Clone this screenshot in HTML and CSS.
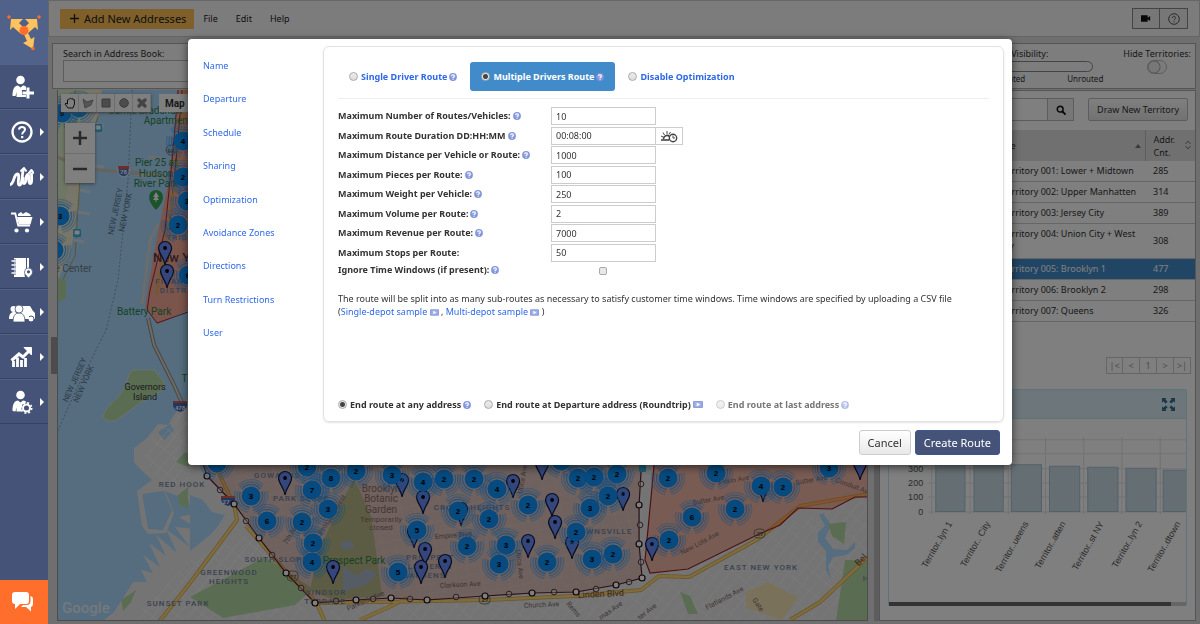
FILE: index.html
```html
<!DOCTYPE html>
<html lang="en">
<head>
<meta charset="utf-8">
<title>Route planner</title>
<link rel="stylesheet" href="styles.css">
</head>
<body>
<svg class="defs" aria-hidden="true">
  <symbol id="help" viewBox="0 0 16 16"><circle cx="8" cy="8" r="7.800" fill="#8094d8"/><circle cx="8" cy="6.500" r="5" fill="#93a5e4"/><path d="M5.300 6.200c0-3.600 5.400-3.300 5.400-.3 0 2.100-2.500 2-2.500 4M8.200 11.400v2.200" fill="none" stroke="#fff" stroke-width="2.300"/></symbol>
  <symbol id="video" viewBox="0 0 20 14"><rect width="20" height="14" rx="2" fill="#8d9fdc"/><rect x="3" y="2.500" width="14" height="9" fill="#a4b3e6"/><path d="M7.500 3v8l6.500-4z" fill="#fff"/></symbol>
</svg>

<nav class="rail" aria-label="Main">
  <a class="rail-logo" href="#" aria-label="Home"><svg viewBox="0 0 36 38" width="36" height="38"><g fill="#fec35d"><path d="M5 6h12l-4 4 6 6-4 5-8-7-3 3z"/><path d="M31 6H19l4 4-6 6 4 5 8-7 3 3z"/><path d="M16 17l4-1 5 10 3.500-2-1.500 12-10-6 4-2z"/></g><circle cx="18" cy="17.500" r="4.500" fill="#ff6d2a"/><g fill="#ff6d2a"><circle cx="3" cy="4" r="1.700"/><circle cx="33" cy="4" r="1.700"/><circle cx="27" cy="35.500" r="1.700"/></g></svg></a>
  <a class="rail-item" href="#" aria-label="Add user"><svg viewBox="0 0 24 24" width="24" height="24" fill="#fff"><circle cx="10.500" cy="5" r="4.300"/><path d="M2.500 21c0-7 2-10.500 5.500-10.500l2.500 2 2.500-2c1.500 0 2.500.5 3 1.500v3h-4v5h4V22H6.500v-5l-1 4z"/><path d="M16.500 12.500h3v4H24v3h-4.500v4h-3v-4h-4v-3h4z"/></svg></a>
  <a class="rail-item more" href="#" aria-label="Help"><svg viewBox="0 0 24 24" width="24" height="24" fill="none" stroke="#fff"><circle cx="12" cy="12" r="9.500" stroke-width="2.300"/><path d="M9 9.600c.2-3.600 6-3.400 6-.1 0 2.300-2.800 2.200-2.800 4.900" stroke-width="2"/><path d="M12.200 16v2.200" stroke-width="2.200"/></svg></a>
  <a class="rail-item more" href="#" aria-label="Routes"><svg viewBox="0 0 24 24" width="24" height="24" fill="none" stroke="#fff" stroke-width="2.800" stroke-linejoin="round"><path d="M0 19.500c4.500 0 3-10 7.500-10.500 3 0-1 11 2 11S12 8 13.500 4"/><path d="M10.500 6.500L14 3l2.500 3.500" stroke-width="2"/><path d="M13 12c0 3-1 6.500 1 6.500 3 0 1-8.500 3.500-9s0 9 2.500 9 1.500-6 1.500-11"/><path d="M18.500 8.500L21.500 5 24 8.500" stroke-width="2"/></svg></a>
  <a class="rail-item more" href="#" aria-label="Orders"><svg viewBox="0 0 24 24" width="24" height="24" fill="#fff"><path d="M1 2.500h5l3 12h11v2H7.500l-3-12H1z"/><path d="M7 7h15.500l-2 7.500H9z"/><path d="M8 6V4l3-2 2 2 3-2 4 2 1 2z"/><circle cx="6.500" cy="20.500" r="2.100"/><circle cx="17" cy="20.500" r="2.100"/></svg></a>
  <a class="rail-item more" href="#" aria-label="Address book"><svg viewBox="0 0 24 24" width="24" height="24"><path d="M4 3h15v12a5 5 0 0 0-4 7H4z" fill="#fff"/><path d="M16.500 3v12" stroke="#455378"/><path d="M2 6h4M2 10h4M2 14h4M2 18h4" stroke="#455378" stroke-width="3"/><path d="M1.500 6H6M1.500 10H6M1.500 14H6M1.500 18H6" stroke="#fff" stroke-width="1.500"/><path d="M18.500 23c-3-3-4-4-4-6a4 4 0 0 1 8 0c0 2-1 3-4 6z" fill="#fff" stroke="#455378" stroke-width=".7"/><circle cx="18.500" cy="16.800" r="1.600" fill="#455378"/></svg></a>
  <a class="rail-item more" href="#" aria-label="Team"><svg viewBox="0 0 26 24" width="26" height="24" fill="#fff"><path d="M9 6h12l3 5 2 2v6H10z"/><circle cx="22" cy="19" r="3" stroke="#455378"/><circle cx="4.500" cy="9" r="3"/><circle cx="15" cy="9" r="3"/><path d="M0 19c0-5 2-7 5-7s4 2 4 7z"/><path d="M11 19c0-5 2-7 5-7s4 2 4 7z"/><g stroke="#455378" stroke-width=".8"><path d="M4 22c0-6 2-9 6-9s6 3 6 9z"/><circle cx="10" cy="9" r="4"/></g></svg></a>
  <a class="rail-item more" href="#" aria-label="Analytics"><svg viewBox="0 0 24 24" width="24" height="24" fill="none" stroke="#fff"><path d="M3.500 22v-6M7.500 22V12.500M11.500 22v-7M15.500 22v-9" stroke-width="2.800"/><path d="M1.500 15.500L9 9l4 3 7-7" stroke-width="3"/><path d="M14 2.500h7.500V10z" fill="#fff"/></svg></a>
  <a class="rail-item more" href="#" aria-label="Account settings"><svg viewBox="0 0 24 24" width="24" height="24" fill="#fff"><circle cx="10.500" cy="5" r="4.300"/><path d="M2.500 21c0-7 2-10.500 5.500-10.500l2.500 2 2.500-2c1.500 0 3 .8 3.500 2-4 0-6 4-4.500 9H6.500v-4l-1 4z"/><circle cx="16.500" cy="18" r="3.500" fill="none" stroke="#fff" stroke-width="2"/><circle cx="16.500" cy="18" r="5.200" fill="none" stroke="#fff" stroke-width="1.600" stroke-dasharray="2 2.080"/></svg></a>
  <a class="rail-chat" href="#" aria-label="Chat"><svg viewBox="0 0 24 24" width="24" height="24" fill="#fff"><path d="M4 2h11q3 0 3 3v6q0 3-3 3H9l-5 5v-5q-3 0-3-3V5q0-3 3-3z"/><path d="M19.500 6q2.500.5 2.500 3v5q0 2.500-2 3v4.500l-5-4.500h-5l2-2h3.500q4 0 4-4z"/></svg></a>
</nav>

<main class="app">
  <header class="topbar">
    <button class="add"><svg viewBox="0 0 10 10" width="9" height="9"><path d="M5 0v10M0 5h10" stroke="#222" stroke-width="1.500"/></svg>Add New Addresses</button>
    <a href="#">File</a><a href="#">Edit</a><a href="#">Help</a>
    <div class="top-tools">
      <button aria-label="Video"><svg viewBox="0 0 12 8" width="10" height="7"><path d="M0 0h8v3l3-2v6L8 5v3H0z" fill="#111"/></svg></button><button aria-label="Help"><svg viewBox="0 0 12 12" width="12" height="12" fill="none" stroke="#555"><circle cx="6" cy="6" r="5.300"/><path d="M4.400 5c0-2.300 3.200-2.200 3.200-.2C7.600 6 6 6 6 7.300M6 8.200v1"/></svg></button>
    </div>
  </header>

  <section class="filters">
    <div class="book"><label for="book">Search in Address Book:</label><input id="book" type="text"></div>
    <div class="visibility"><span>Marker Visibility:</span><div class="track"></div><div class="ticks"><span>Routed</span><span>Unrouted</span></div></div>
    <div class="hide"><label for="hide">Hide Territories:</label><input id="hide" class="toggle" type="checkbox"></div>
  </section>

  <div class="workspace">
    <div class="gutter"><i></i></div>
    <section class="map" aria-label="Map">
      <svg class="map-art" viewBox="57 90 811 530" preserveAspectRatio="xMidYMid slice">
        <defs>
          <pattern id="grid" width="9" height="17" patternUnits="userSpaceOnUse" patternTransform="rotate(40)"><path d="M0 0H9M0 0V17" stroke="#fff" stroke-width="1" fill="none"/></pattern>
          <pattern id="grid2" width="13" height="10" patternUnits="userSpaceOnUse" patternTransform="rotate(-12)"><path d="M0 0H13M0 0V10" stroke="#fff" stroke-width="1" fill="none"/></pattern>
          <g id="cl"><g fill="none" stroke="#2f9bff" stroke-width="1.500"><circle r="11.500" stroke-dasharray="21 3.086" stroke-opacity=".75" transform="rotate(96)"/><circle r="14" stroke-dasharray="25 4.322" stroke-opacity=".5" transform="rotate(98)"/><circle r="16.500" stroke-dasharray="28 6.558" stroke-opacity=".35" transform="rotate(100)"/></g><circle r="9.500" fill="#0c94ff"/></g>
          <g id="pin"><path d="M0 17C-1 9-6.500 6-6.500 0a6.500 6.500 0 0 1 13 0C6.500 6 1 9 0 17z" fill="#6a8dfa" stroke="#10183e" stroke-width="1.200"/><circle r="1.900" fill="#000"/></g>
        </defs>
        <rect x="57" y="90" width="811" height="530" fill="#aadaff"/>
        <g fill="#f1ecd2"><path d="M57 90h45l-4 26-16 34-4 60-8 45-13 25z"/><path d="M57 90h30l-10 60-20 80z" fill="#dcefc9"/></g>
        <path d="M57 157l30 12 60 5 40 5" stroke="#cfc4b4" stroke-width="3" fill="none"/>
        <path d="M75 90v20M98 116l-18 60-5 80-14 27" stroke="#b5a66d" fill="none"/>
        <path d="M58 278l8 2 0 18-9 5z" fill="#b5dba6"/>
        <g stroke="#cfe3ef" stroke-width="3" fill="none"><path d="M88 123l16 3M82 165l22 2M80 190l10 2M78 212l12 2M74 240l10 2"/><path d="M158 224l-8 16-8 64" stroke="#d9d9d9"/><path d="M150 175l-12 1M162 158l-14-1" stroke="#d9d9d9"/></g>
        <path d="M178 90h100v200l-90 20-30 14-13-16 8-50 14-70 8-60z" fill="#f7a996"/>
        <path d="M178 90l-5 60-8 80-15 60-3 20 10 13 31-11M182 90l-5 60-8 80" stroke="#9c2a3a" fill="none"/>
        <path d="M185 90l-8 80-15 95-6 30" stroke="#e9b14e" stroke-width="2" fill="none"/>
        <path d="M132 90l-4 90-10 100-12 50-30 60-20 45" stroke="#7ca0bd" stroke-dasharray="2 2" fill="none"/>
        <path d="M148 318l6 27 20 40 18 40" stroke="#8d8d86" stroke-width="4" fill="none"/><path d="M148 318l6 27 20 40 18 40" stroke="#dcd5cc" stroke-width="2" fill="none"/>
        <path d="M132 370l22 0 10 12-1 8-23 13-22 16q-9 5-15-1 0-7 8-14 16-15 17-27z" fill="#b5dba6" stroke="#d8e4d6"/>
        <path d="M188 398l-14 17-6 10-10-1-11 14-13 10v15l18 17-15 11 5 35 6 8 18-1 8-20-9-22 23 9 6 14-15 3 18 12-22-2 15 20-24-18 11 24-21-18 10 21-17-13 11 24-17-12 10 18-12-3 6 12-14 0-19 30-10 8h763V380z" fill="#e9e9e9"/>
        <path d="M142 494l22-3 8 20-9 19-15-1zM158 432l12-8 4 6-10 10z" fill="#aadaff"/>
        <path d="M188 405l-45 45 10 30 35 8zM190 560l70-30 50 90H130z" fill="url(#grid)" opacity=".75"/>
        <path d="M205 470l30 36 80 97 327-22V460H205z" fill="url(#grid2)" opacity=".6"/>
        <path d="M330 604l312-24 226-85v125H330z" fill="url(#grid)" opacity=".6"/>
        <path d="M190 495l13 5 9 12 13 3-7 11-8 9-20 16zM826 551l-8-9 0-10 7-6-6-11 4-2 8 12-6 13 8 11 14 1 8-8v6l-9 7-13 2-5 9 3 14-5-10z" fill="#aadaff"/>
        <path d="M121 600l15-10-5 12-8 9zM178 495l10-8v22l-10-6zM185 452l9 7-6 8-12-5zM190 597l75-40 48 32-18 16-72 13zM828 524l18-2-2 22-12-8zM680 592l10 4 8 18-10 0zM845 560h23v60h-32z" fill="#b5dba6"/>
        <path d="M746 592l22-10 30 15-16 23-36-12z" fill="#f3e2b5"/>
        <path d="M354 478l17 38 7 50 4 30-48 4-24-10 8-40z" fill="#b7dca2"/><path d="M343 566l14 10 10-8 10 6-10 10-24 8zM340 543l10-3 4 8-12 2z" fill="#aadaff"/>
        <g fill="none" stroke-linejoin="round"><g stroke="#d3aa56" stroke-width="4"><path d="M210 455l24 50 3 15-47 63-40 50M246 526l40 46 30 30 10 22M315 603l170-3 90-4 66-6 18-14 30 1 69-38 42-33 68-12M790 620l30-18 48-45M360 620l31-14 16-8"/></g><g stroke="#ffd879" stroke-width="2.500"><path d="M210 455l24 50 3 15-47 63-40 50M246 526l40 46 30 30 10 22M315 603l170-3 90-4 66-6 18-14 30 1 69-38 42-33 68-12M790 620l30-18 48-45M360 620l31-14 16-8"/></g></g>
        <path d="M207 476l27 28 25 34 27 35 29 30 41-3 35-2 36 2 58-4 47-3 44-1 40-7 26-7-3-34v-39l3-50H200z" fill="#b94a2c" fill-opacity=".24" stroke="#5a2030" stroke-width="1.200"/>
        <path d="M655 455l-10 105 5 13 38-4 69-34 23-10 18-17 34 1 23-12h13v-42z" fill="#ff6030" fill-opacity=".36" stroke="#98232c" stroke-width="1.200"/>
        <g class="area">
          <text x="182" y="487">RED HOOK</text><text x="277" y="478">GOWANUS</text><text x="301" y="501">PARK SLOPE</text><text x="276" y="562">SOUTH SLOPE</text><text x="229" y="575">GREENWOOD</text><text x="229" y="584">HEIGHTS</text><text x="325" y="595">WINDSOR</text><text x="325" y="604">TERRACE</text><text x="178" y="606">SUNSET PARK</text><text x="472" y="510">CROWN HEIGHTS</text><text x="430" y="560">PROSPECT</text><text x="430" y="569">LEFFERTS</text><text x="424" y="578">GARDENS</text><text x="600" y="534">BROWNSVILLE</text><text x="761" y="570">EAST NEW YORK</text><text x="186" y="240">TRIBECA</text><text x="180" y="284">FINANCIAL</text><text x="181" y="293">DISTRICT</text><text x="866" y="581">H</text>
        </g>
        <g class="place"><text x="146" y="114">Jamie Bradshaw</text><text x="170" y="124">Apartments</text><text x="156" y="166">Pier 25 at</text><text x="156" y="177">Hudson</text><text x="156" y="187">River Park</text><text x="144" y="315">Battery Park</text><text x="354" y="564">Prospect Park</text><text x="207" y="382" fill="#167b74">The Battery</text></g>
        <g class="brown"><text x="381" y="492">Brooklyn</text><text x="381" y="502">Botanic</text><text x="381" y="513">Garden</text><g class="small"><text x="381" y="522">Temporarily</text><text x="381" y="530">closed</text></g><text x="73" y="272" class="plain">e Center</text></g>
        <g class="island"><text x="145" y="390">Governors</text><text x="145" y="400">Island</text></g>
        <g class="state"><text transform="translate(118 212) rotate(-78)">NEW JERSEY</text><text transform="translate(128 213) rotate(-78)">NEW YORK</text><text transform="translate(77 381) rotate(-66)">NEW JERSEY</text><text transform="translate(86 385) rotate(-66)">NEW YORK</text></g>
        <g class="road"><text transform="translate(435 539) rotate(-4)">Empire Blvd</text><text transform="translate(440 588) rotate(-3)">Clarkson Ave</text><text transform="translate(348 611) rotate(-24)">Parkside Ave</text><text transform="translate(719 485) rotate(-10)">Pitkin Ave</text><text transform="translate(693 505) rotate(-10)">Sutter Ave</text><text transform="translate(796 485) rotate(-10)">Sutter Ave</text><text transform="translate(682 555) rotate(-28)">New Lots Ave</text><text transform="translate(707 610) rotate(-28)">Flatlands Ave</text><text transform="translate(524 608) rotate(-3)">Church Ave</text><text transform="translate(835 482) rotate(20)">Conduit Ave</text><text transform="translate(522 494) rotate(-80)">Utica Ave</text><text transform="translate(516 550) rotate(84)">Utica Ave</text><text transform="translate(566 604) rotate(50)">Rems</text><text transform="translate(601 620) rotate(-35)">mas Ave</text><text transform="translate(640 620) rotate(-38)">ter Ave</text><text transform="translate(752 600) rotate(55)">Gate</text><text transform="translate(322 535) rotate(-58)">Prospect West</text><text transform="translate(287 545) rotate(-60)">7th Ave</text></g>
        <text x="601" y="597" class="linden" transform="rotate(-3 601 597)">Linden Blvd</text><text x="863" y="562" class="linden" transform="rotate(-45 863 562)">Bel</text>
        <text x="153" y="262" class="city">New York</text>
        <g><path d="M118 167h11v3q1 5-5.500 7-6.500-2-5.500-7z" fill="#4a78c8" stroke="#fff"/><path d="M118 166h11v3h-11z" fill="#e15a4d"/><text x="123.500" y="174" class="shield">78</text><path d="M173 401h14v4q0 5-7 7-7-2-7-7z" fill="#3d6cc0"/><path d="M173 401h14v2h-14z" fill="#e15a4d"/><text x="180" y="410" class="shield">478</text><path d="M221 496h14v3q0 5-7 7-7-2-7-7z" fill="#3d6cc0"/><path d="M221 496h14v2h-14z" fill="#e15a4d"/><text x="226" y="504" class="shield">27</text><g fill="none" stroke="#776"><rect x="287" y="571" width="11" height="10" rx="4"/><rect x="479" y="595" width="11" height="9" rx="4"/><rect x="754" y="529" width="11" height="9" rx="4"/><circle cx="171" cy="150" r="5"/></g><g class="num"><text x="293" y="579">27</text><text x="485" y="602">27</text><text x="760" y="536">27</text><text x="171" y="153">9A</text></g></g>
        <path d="M156 210q-7-7-7-13a7 7 0 0 1 14 0q0 6-7 13z" fill="#3aa757"/><path d="M156 192l3 5h-2l2 3h-2.500v2h-1v-2H153l2-3h-2z" fill="#fff"/>
        <g fill="#38b6e8"><rect x="94" y="124" width="8" height="8" rx="1"/><rect x="73" y="229" width="8" height="8" rx="1"/><rect x="639" y="464" width="7" height="8" rx="1"/></g>
        <path d="M96 126h4v3h-4zM75 231h4v3h-4z" fill="#fff" stroke="#fff"/>
        <g fill="#fff" fill-opacity=".35" stroke="#5a3c40"><circle cx="220" cy="490" r="2.800"/><circle cx="246" cy="521" r="2.800"/><circle cx="272" cy="555" r="2.800"/><circle cx="301" cy="588" r="2.800"/><circle cx="336" cy="601" r="2.800"/><circle cx="373" cy="599" r="2.800"/><circle cx="410" cy="599" r="2.800"/><circle cx="456" cy="597" r="2.800"/><circle cx="509" cy="594" r="2.800"/><circle cx="554" cy="592" r="2.800"/><circle cx="596" cy="589" r="2.800"/><circle cx="629" cy="582" r="2.800"/><circle cx="641" cy="562" r="2.800"/><circle cx="640" cy="525" r="2.800"/><circle cx="641" cy="484" r="2.800"/></g>
        <g fill="#fff" stroke="#200a10" stroke-width="1.200"><circle cx="207" cy="476" r="3"/><circle cx="234" cy="504" r="3"/><circle cx="259" cy="538" r="3"/><circle cx="286" cy="573" r="3"/><circle cx="315" cy="603" r="3"/><circle cx="356" cy="600" r="3"/><circle cx="391" cy="598" r="3"/><circle cx="427" cy="600" r="3"/><circle cx="485" cy="596" r="3"/><circle cx="532" cy="593" r="3"/><circle cx="576" cy="592" r="3"/><circle cx="616" cy="585" r="3"/><circle cx="642" cy="578" r="3"/><circle cx="639" cy="544" r="3"/><circle cx="639" cy="505" r="3"/></g>
        <use href="#pin" x="285" y="478"/><use href="#pin" x="402" y="480"/><use href="#pin" x="423" y="497"/><use href="#pin" x="513" y="481"/><use href="#pin" x="425" y="549"/><use href="#pin" x="421" y="567"/><use href="#pin" x="333" y="567"/><use href="#pin" x="445" y="561"/><use href="#pin" x="528" y="541"/><use href="#pin" x="461" y="509"/><use href="#pin" x="414" y="531"/><use href="#pin" x="552" y="500"/><use href="#pin" x="555" y="522"/><use href="#pin" x="623" y="494"/><use href="#pin" x="572" y="542"/><use href="#pin" x="652" y="544"/><use href="#pin" x="763" y="485"/><use href="#pin" x="542" y="463"/><use href="#pin" x="860" y="463"/><use href="#pin" x="165" y="248"/><use href="#pin" x="167" y="271"/>
        <use href="#cl" x="217" y="463"/><use href="#cl" x="307" y="467"/><use href="#cl" x="331" y="478"/><use href="#cl" x="312" y="490"/><use href="#cl" x="251" y="496"/><use href="#cl" x="356" y="471"/><use href="#cl" x="392" y="475"/><use href="#cl" x="423" y="482"/><use href="#cl" x="444" y="479"/><use href="#cl" x="474" y="479"/><use href="#cl" x="497" y="489"/><use href="#cl" x="328" y="509"/><use href="#cl" x="267" y="521"/><use href="#cl" x="302" y="522"/><use href="#cl" x="458" y="511"/><use href="#cl" x="489" y="519"/><use href="#cl" x="417" y="530"/><use href="#cl" x="313" y="543"/><use href="#cl" x="312" y="562"/><use href="#cl" x="467" y="546"/><use href="#cl" x="506" y="545"/><use href="#cl" x="499" y="564"/><use href="#cl" x="398" y="572"/><use href="#cl" x="528" y="505"/><use href="#cl" x="561" y="461"/><use href="#cl" x="578" y="478"/><use href="#cl" x="594" y="477"/><use href="#cl" x="617" y="474"/><use href="#cl" x="668" y="478"/><use href="#cl" x="716" y="473"/><use href="#cl" x="761" y="486"/><use href="#cl" x="783" y="487"/><use href="#cl" x="829" y="468"/><use href="#cl" x="608" y="496"/><use href="#cl" x="590" y="508"/><use href="#cl" x="735" y="509"/><use href="#cl" x="692" y="517"/><use href="#cl" x="669" y="540"/><use href="#cl" x="576" y="532"/><use href="#cl" x="613" y="554"/><use href="#cl" x="592" y="559"/><use href="#cl" x="547" y="562"/>
        <use href="#cl" x="79" y="108"/><use href="#cl" x="62" y="113"/><use href="#cl" x="183" y="141"/><use href="#cl" x="187" y="201"/><use href="#cl" x="183" y="177"/><use href="#cl" x="178" y="225"/><use href="#cl" x="188" y="275"/><use href="#cl" x="60" y="216"/><use href="#cl" x="54" y="250"/>
        <g class="count"><text x="307" y="470">2</text><text x="331" y="481">8</text><text x="312" y="493">7</text><text x="251" y="499">3</text><text x="356" y="474">2</text><text x="392" y="478">3</text><text x="423" y="485">4</text><text x="444" y="482">2</text><text x="474" y="482">2</text><text x="497" y="492">4</text><text x="328" y="512">3</text><text x="267" y="524">6</text><text x="302" y="525">2</text><text x="458" y="514">2</text><text x="489" y="522">2</text><text x="417" y="533">5</text><text x="313" y="546">2</text><text x="312" y="565">4</text><text x="467" y="549">2</text><text x="506" y="548">3</text><text x="499" y="567">3</text><text x="398" y="575">5</text><text x="528" y="508">2</text><text x="578" y="481">2</text><text x="594" y="480">2</text><text x="617" y="477">2</text><text x="668" y="481">2</text><text x="716" y="476">2</text><text x="761" y="489">4</text><text x="783" y="490">2</text><text x="829" y="471">3</text><text x="608" y="499">2</text><text x="590" y="511">3</text><text x="735" y="512">2</text><text x="692" y="520">6</text><text x="669" y="543">2</text><text x="576" y="535">2</text><text x="613" y="557">2</text><text x="592" y="562">3</text><text x="547" y="565">2</text><text x="62" y="116">9</text><text x="183" y="144">4</text><text x="187" y="204">3</text><text x="183" y="180">2</text><text x="178" y="228">2</text><text x="188" y="278">6</text><text x="60" y="219">3</text></g>
        <text x="62" y="613" class="google">Google</text>
      </svg>
      <div class="map-ui">
        <div class="draw">
          <button aria-label="Pan"><svg viewBox="0 0 12 12" width="12" height="12"><path d="M4 11L1 7l1-1 1.500 1V3l1-1 .7.500L6.500 1l1 .8 1.200-.3.300 1.200h1.300L10.500 7 9 11z" fill="#fff" stroke="#222"/></svg></button>
          <button aria-label="Polygon"><svg viewBox="0 0 12 12" width="12" height="12"><path d="M1 2l4 3 6-2-2 5-6 3z" fill="#aaa" stroke="#888"/></svg></button>
          <button aria-label="Rectangle"><svg viewBox="0 0 12 12" width="12" height="12"><path d="M2 2h8v8H2z" fill="#999" stroke="#777"/></svg></button>
          <button aria-label="Circle"><svg viewBox="0 0 12 12" width="12" height="12"><circle cx="6" cy="6" r="4.300" fill="#999" stroke="#777"/></svg></button>
          <button aria-label="Delete"><svg viewBox="0 0 12 12" width="12" height="12"><path d="M3 3l6 6M9 3L3 9" stroke="#888" stroke-width="3.500" stroke-linecap="round"/></svg></button>
        </div>
        <button class="maptype">Map <i></i></button>
        <div class="zoom"><button aria-label="Zoom in"><svg viewBox="0 0 14 14" width="14" height="14"><path d="M7 0v14M0 7h14" stroke="#555" stroke-width="2.500"/></svg></button><button aria-label="Zoom out"><svg viewBox="0 0 14 14" width="14" height="14"><path d="M0 7h14" stroke="#555" stroke-width="2.500"/></svg></button></div>
      </div>
    </section>
    <div class="splitter"></div>
    <section class="side">
      <div class="find"><input type="text" aria-label="Search territories"><button class="go" aria-label="Search"><svg viewBox="0 0 12 12" width="10" height="10" fill="none" stroke="#111"><circle cx="5" cy="5" r="3.500" stroke-width="1.800"/><path d="M7.500 7.500l4 4" stroke-width="2.200"/></svg></button><button class="new">Draw New Territory</button></div>
      <table>
        <thead><tr><th class="name">Name<svg viewBox="0 0 6 4" width="6" height="4"><path d="M0 4l3-4 3 4z" fill="#777"/></svg></th><th class="cnt">Addr. Cnt.<svg viewBox="0 0 6 10" width="6" height="10" fill="none" stroke="#777"><path d="M.5 4L3 1l2.500 3M.5 6L3 9l2.500-3"/></svg></th></tr></thead>
        <tbody>
          <tr><td>Territory 001: Lower + Midtown</td><td>285</td></tr>
          <tr><td>Territory 002: Upper Manhatten</td><td>314</td></tr>
          <tr><td>Territory 003: Jersey City</td><td>389</td></tr>
          <tr><td>Territory 004: Union City + West<br>NY</td><td>308</td></tr>
          <tr class="on"><td>Territory 005: Brooklyn 1</td><td>477</td></tr>
          <tr><td>Territory 006: Brooklyn 2</td><td>298</td></tr>
          <tr><td>Territory 007: Queens</td><td>326</td></tr>
        </tbody>
      </table>
      <div class="pages"><button>|&lt;</button><button>&lt;</button><button>1</button><button>&gt;</button><button>&gt;|</button></div>
      <div class="card">
        <div class="card-head"><svg viewBox="0 0 14 14" width="13" height="13" fill="#31708f"><path d="M0 0h5L3.600 1.400 6 4 4 6 1.400 3.600 0 5zM14 0v5l-1.400-1.400L10 6 8 4l2.400-2.600L9 0zM0 14V9l1.400 1.400L4 8l2 2-2.400 2.600L5 14zM14 14H9l1.400-1.400L8 10l2-2 2.600 2.400L14 9z"/></svg></div>
        <svg class="chart" viewBox="891 418 295 183" preserveAspectRatio="xMinYMin slice">
          <path d="M930 438.500h256M930 452.500h256M930 467.500h256M930 481.500h256M930 495.500h256M930 510.500h256M933.500 436v77M971.500 436v77M1009.500 436v77M1046.500 436v77M1084.500 436v77M1122.500 436v77M1160.500 436v77" stroke="#e4e4e4"/>
          <g fill="#cbdde6" stroke="#a5c4d3"><path d="M937.500 510v-68h29v68zM975.500 510v-56h29v56zM1012.500 510v-46.500h30V510zM1050.500 510v-45h30v45zM1088.500 510v-44h30v44zM1126.500 510v-43h30v43zM1163.500 510v-41h30v41z"/></g>
          <g class="yl"><text x="925" y="471">300</text><text x="925" y="485">200</text><text x="925" y="499">100</text><text x="925" y="513">0</text></g>
          <g class="xl"><text transform="translate(954 522) rotate(-60)">Territor..lyn 1</text><text transform="translate(992 522) rotate(-60)">Territor.. City</text><text transform="translate(1030 522) rotate(-60)">Territor..ueens</text><text transform="translate(1067 522) rotate(-60)">Territor..atten</text><text transform="translate(1105 522) rotate(-60)">Territor..st NY</text><text transform="translate(1143 522) rotate(-60)">Territor..lyn 2</text><text transform="translate(1181 522) rotate(-60)">Territor..dtown</text></g>
        </svg>
        <div class="scroll"><i></i></div>
      </div>
    </section>
  </div>
  <div class="backdrop"></div>
</main>

<div class="modal-layer">
  <form class="modal" role="dialog" aria-label="Create route">
    <div class="modal-body">
      <nav class="steps"><a href="#">Name</a><a href="#">Departure</a><a href="#">Schedule</a><a href="#">Sharing</a><a href="#">Optimization</a><a href="#">Avoidance Zones</a><a href="#">Directions</a><a href="#">Turn Restrictions</a><a href="#">User</a></nav>
      <section class="panel">
        <div class="modes">
          <label class="mode"><input type="radio" name="mode">Single Driver Route<svg class="q"><use href="#help"/></svg></label>
          <label class="mode active"><input type="radio" name="mode" checked>Multiple Drivers Route<svg class="q"><use href="#help"/></svg></label>
          <label class="mode"><input type="radio" name="mode">Disable Optimization</label>
        </div>
        <div class="fields">
          <div class="row"><label for="f1">Maximum Number of Routes/Vehicles:<svg class="q"><use href="#help"/></svg></label><input id="f1" type="text" value="10"></div>
          <div class="row"><label for="f2">Maximum Route Duration DD:HH:MM<svg class="q"><use href="#help"/></svg></label><input id="f2" type="text" value="00:08:00"><button type="button" class="pick" aria-label="Pick duration"><svg viewBox="0 0 18 14" width="18" height="14" fill="none" stroke="#444"><path d="M1 11h8" stroke-width="1.600"/><path d="M3.500 10a3.500 3.500 0 0 1 6-2.500" stroke-width="1.600"/><path d="M1 7l2 1M3 3.500L4.500 6M7 2v3M10.500 3L9 5.500"/><circle cx="13" cy="9" r="3.700" stroke-width="1.400" fill="#fff"/><path d="M13 6.500V9h2"/></svg></button></div>
          <div class="row"><label for="f3">Maximum Distance per Vehicle or Route:<svg class="q"><use href="#help"/></svg></label><input id="f3" type="text" value="1000"></div>
          <div class="row"><label for="f4">Maximum Pieces per Route:<svg class="q"><use href="#help"/></svg></label><input id="f4" type="text" value="100"></div>
          <div class="row"><label for="f5">Maximum Weight per Vehicle:<svg class="q"><use href="#help"/></svg></label><input id="f5" type="text" value="250"></div>
          <div class="row"><label for="f6">Maximum Volume per Route:<svg class="q"><use href="#help"/></svg></label><input id="f6" type="text" value="2"></div>
          <div class="row"><label for="f7">Maximum Revenue per Route:<svg class="q"><use href="#help"/></svg></label><input id="f7" type="text" value="7000"></div>
          <div class="row"><label for="f8">Maximum Stops per Route:</label><input id="f8" type="text" value="50"></div>
        </div>
        <div class="row ignore"><label for="f9">Ignore Time Windows (if present):<svg class="q"><use href="#help"/></svg></label><span class="tick"><input id="f9" type="checkbox"></span></div>
        <p class="note">The route will be split into as many sub-routes as necessary to satisfy customer time windows. Time windows are specified by uploading a CSV file<br>(<a href="#">Single-depot sample <svg class="v"><use href="#video"/></svg></a> , <a href="#">Multi-depot sample <svg class="v"><use href="#video"/></svg></a> )</p>
        <div class="ends">
          <label><input type="radio" name="end" checked>End route at any address<svg class="q"><use href="#help"/></svg></label>
          <label><input type="radio" name="end">End route at Departure address (Roundtrip)<svg class="v"><use href="#video"/></svg></label>
          <label class="off"><input type="radio" name="end" disabled>End route at last address<svg class="q"><use href="#help"/></svg></label>
        </div>
      </section>
    </div>
    <footer class="actions"><button type="button" class="cancel">Cancel</button><button type="button" class="create">Create Route</button></footer>
  </form>
</div>
</body>
</html>
```

FILE: styles.css
```css
* { box-sizing: border-box; }
html, body { height: 100%; margin: 0; }
body { display: flex; overflow: hidden; background: #dedede; color: #333; font: 9px/13px "Noto Sans", sans-serif; }
button, input { font: inherit; color: inherit; margin: 0; }
button { padding: 0; cursor: pointer; }
a { text-decoration: none; color: #2f69e8; }
svg { flex: none; }
.defs { position: absolute; width: 0; height: 0; }

.rail { display: flex; flex-direction: column; width: 48px; background: #455378; flex: none; }
.rail a { display: flex; align-items: center; justify-content: center; }
.rail-logo { height: 64px; background: #50618a; }
.rail-item { position: relative; height: 45px; border-bottom: 1px solid #36425f; border-top: 1px solid #526188; padding-right: 4px; }
.rail-item.more::after { content: ""; position: absolute; right: 4px; top: 18px; border: 4px solid transparent; border-left-color: #fff; border-right: 0; }
.rail-chat { margin-top: auto; height: 44px; background: #ff6f2b; padding-right: 2px; }

.app { position: relative; flex: 1; min-width: 0; display: flex; flex-direction: column; }
.backdrop { position: absolute; inset: 0; background: rgba(0, 0, 0, .5); }

.topbar { display: flex; align-items: center; gap: 18px; height: 37px; padding: 0 11px; background: #f9f9f9; border: 1px solid #ccc; }
.topbar a { color: #222; }
.add { display: flex; align-items: center; gap: 5px; height: 20px; padding: 0 8px 0 10px; margin-right: -9px; border: 0; background: #ffc055; color: #222; font-size: 11px; }
.top-tools { display: flex; margin-left: auto; }
.top-tools button { display: flex; align-items: center; justify-content: center; width: 28px; height: 21px; border: 1px solid #888; background: #eee; }
.top-tools button + button { border-left: 0; }

.filters { display: flex; gap: 30px; margin: 6px 4px 0; height: 46px; padding: 3px 4px 0 10px; border: 1px solid #aaa; background: #fafafa; }
.filters > div { display: flex; flex-direction: column; }
.book { flex: 1; }
.book input { height: 22px; border: 1px solid #bbb; background: #fff; }
.visibility { width: 120px; }
.visibility > span { padding-left: 5px; }
.track { height: 11px; border: 1px solid #888; border-radius: 6px; margin-top: 1px; }
.ticks { display: flex; justify-content: flex-end; gap: 42px; font-size: 8px; margin-right: -10px; }
.hide { align-items: center; }
.toggle { appearance: none; width: 20px; height: 14px; border: 1px solid #bbb; border-radius: 7px; background: radial-gradient(circle at 6px 6px, #eee 5px, #aaa 6px, #f6f6f6 7px); }

.workspace { flex: 1; min-height: 0; display: flex; padding: 1px 4px 3px 3px; }
.gutter { width: 6px; display: flex; align-items: center; }
.gutter i { width: 6px; height: 37px; background: #999; }
.map { flex: 812; min-width: 0; display: grid; border: 1px solid #999; border-width: 0 1px 1px; overflow: hidden; }
.map > * { grid-area: 1 / 1; }
.map-art { width: 100%; height: 100%; min-height: 0; }
.map-ui { display: grid; grid-template-columns: auto 1fr; column-gap: 8px; row-gap: 11px; place-content: start; justify-items: start; padding: 4px 3px; }
.map-ui button { border: 0; background: #fff; display: flex; align-items: center; justify-content: center; }
.draw { display: flex; box-shadow: 0 1px 3px #777; }
.draw button { width: 18px; height: 18px; border-right: 1px solid #ddd; }
.map-ui .maptype { height: 18px; padding: 0 6px; gap: 5px; font: 700 10px Roboto, sans-serif; }
.maptype i { border: 3px solid transparent; border-top-color: #555; border-bottom: 0; }
.zoom { margin-left: 4px; box-shadow: 0 1px 3px #777; }
.zoom button { width: 30px; height: 30px; }
.zoom button + button { border-top: 1px solid #ddd; }
.map-art text { font: 9px Roboto, sans-serif; }
.map-art .area text { font-size: 8px; font-weight: 500; letter-spacing: 1px; text-anchor: middle; fill: #73839c; }
.map-art .place text { font-size: 10px; text-anchor: middle; fill: #2b8547; }
.map-art .brown text { font-size: 10px; text-anchor: middle; fill: #8f6c63; }
.map-art .brown .small text { font-size: 8px; }
.map-art .brown .plain { fill: #6b7d8c; }
.map-art .island text { text-anchor: middle; fill: #333; }
.map-art .state text { text-anchor: middle; font-size: 8px; fill: #5b7288; }
.map-art .road text { font-size: 7px; fill: #7c6a6a; }
.map-art .linden { text-anchor: middle; fill: #7a4b2a; }
.map-art .city { font-size: 13px; font-weight: 500; fill: #5d3944; }
.map-art .shield, .map-art .num text { font-size: 6px; font-weight: 700; text-anchor: middle; fill: #fff; }
.map-art .num text { fill: #554; }
.map-art .count text { font: 700 8px "Liberation Sans", sans-serif; text-anchor: middle; fill: #000; }
.map-art .google { font: 500 15px Roboto, sans-serif; fill: #e8f2fa; }

.splitter { width: 11px; border-right: 5px solid #bbb; }
.side { flex: 316; min-width: 0; display: flex; flex-direction: column; background: #fff; border: 1px solid #aaa; }
.find { display: flex; height: 39px; padding: 7px 7px 0 8px; }
.find > * { height: 23px; border: 1px solid #bbb; }
.find input { flex: 1; min-width: 0; }
.go { width: 26px; background: #eee; border-left: 0; display: flex; align-items: center; justify-content: center; }
.new { margin-left: 14px; padding: 0 8px; background: linear-gradient(#fff, #e4e4e4); border-radius: 2px; }
table { width: 100%; border-collapse: collapse; table-layout: fixed; }
th { position: relative; height: 31px; padding: 0 20px 0 8px; text-align: left; font-weight: 400; background: #e0e0e0; }
th svg { position: absolute; right: 4px; top: 10px; }
.name svg { top: 14px; }
.name { padding-left: 110px; border-right: 1px solid #bbb; }
.cnt { width: 50px; }
td { padding: 3px 0 3px 8px; border-bottom: 1px solid #ccc; line-height: 14px; }
td:first-child { padding-left: 122px; white-space: nowrap; }
.on td { background: #428bca; color: #fff; }
.pages { display: flex; margin: 35px 4px 0 auto; }
.pages button { width: 17px; height: 17px; border: 1px solid #ccc; background: none; color: #999; }
.pages button + button { border-left: 0; }
.card { flex: 1; min-height: 0; display: flex; flex-direction: column; margin: 15px 8px 14px 8px; border: 1px solid #bce8f1; border-bottom: 0; border-radius: 2px; }
.card-head { height: 29px; flex: none; display: flex; align-items: center; justify-content: flex-end; padding-right: 11px; background: #d9edf7; border-bottom: 1px solid #bce8f1; }
.chart { flex: 1; min-height: 0; width: 100%; }
.chart text { font: 9px "Liberation Sans", sans-serif; fill: #555; text-anchor: end; }
.scroll { height: 4px; background: #ccc; }
.scroll i { display: block; height: 4px; width: 95%; background: #666; }

.modal-layer { position: fixed; inset: 0; display: flex; justify-content: center; align-items: flex-start; padding-top: 39px; }
.modal { width: min(824px, 100%); padding: 7px 8px 10px 15px; background: #fff; border-radius: 4px; box-shadow: 0 2px 8px rgba(0, 0, 0, .6); }
.modal-body { display: grid; grid-template-columns: 120px 1fr; }
.steps { display: flex; flex-direction: column; justify-content: space-between; padding: 13px 0 83px; }
.panel { padding: 15px 14px 10px; border: 1px solid #e2e2e2; border-radius: 6px; box-shadow: 0 1px 2px #e4e4e4; }
.q { width: 8px; height: 8px; margin-left: 2px; vertical-align: -1px; }
.v { width: 10px; height: 7px; margin-left: 2px; vertical-align: -1px; }
.note .v { width: 9px; margin-left: 0; }
.modes { display: flex; gap: 2px; padding-bottom: 7px; border-bottom: 1px solid #eee; }
.mode { display: flex; align-items: center; height: 29px; padding: 0 11px; border-radius: 3px; color: #2f69e8; font-weight: 700; }
.mode.active { background: #428bca; color: #fff; }
input[type=radio] { appearance: none; width: 9px; height: 9px; flex: none; margin-right: 3px; border: 1px solid #aaa; border-radius: 50%; background: linear-gradient(#ececec, #ddd); }
input[type=radio]:checked { background: radial-gradient(circle, #444 2px, #e8e8e8 3px); }
.fields { display: grid; grid-auto-rows: 1fr; height: 156px; margin-top: 8px; }
.row { display: flex; align-items: flex-start; }
.row label { width: 213px; line-height: 17px; font-weight: 700; }
.row input[type=text] { width: 105px; height: 18px; padding: 0 4px; border: 1px solid #ccc; background: #fff; }
.pick { width: 28px; height: 18px; margin-left: -1px; border: 1px solid #ccc; background: #fff; display: flex; align-items: center; justify-content: center; }
.tick { width: 104px; display: flex; justify-content: center; padding-top: 6px; }
.tick input { appearance: none; width: 8px; height: 8px; border: 1px solid #aaa; border-radius: 2px; background: #e8e8e8; }
.ignore { margin-top: -2px; }
.note { margin: 14px 0 80px; }
.ends { display: flex; gap: 13px; font-weight: 700; }
.ends label { display: flex; align-items: center; }
.off { color: #777; }
.off input, .off svg { opacity: .6; }
.actions { display: flex; justify-content: flex-end; gap: 4px; padding: 8px 4px 0 0; }
.actions button { height: 25px; padding: 0 8px; border: 1px solid #ccc; border-radius: 3px; background: linear-gradient(#fff, #e8e8e8); font-size: 11px; }
.actions .create { background: #455378; border-color: #3e5590; color: #fff; }
```
